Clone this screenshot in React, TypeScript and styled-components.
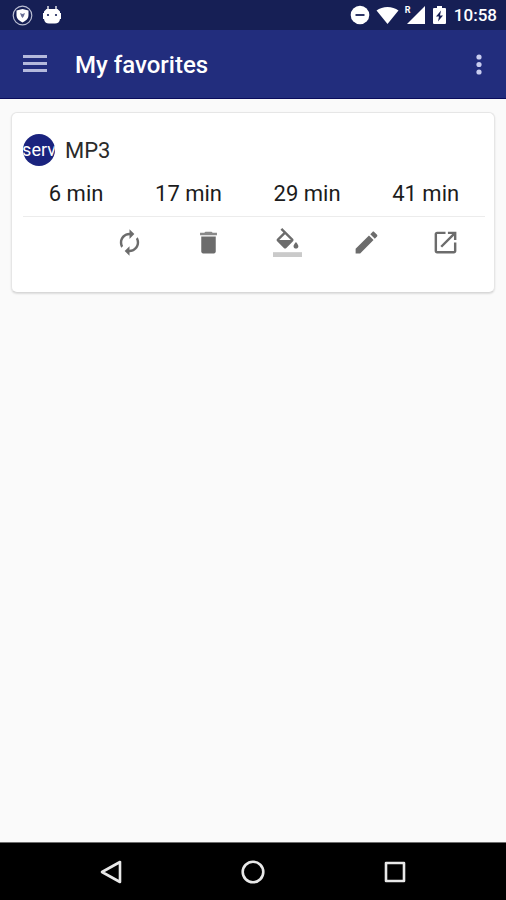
import React from "react";
import styled, { createGlobalStyle } from "styled-components";

const GlobalStyle = createGlobalStyle`
  *, *::before, *::after { box-sizing: border-box; }
  body {
    margin: 0;
    background: #fafafa;
    font-family: Roboto, "Liberation Sans", sans-serif;
  }
`;

const Screen = styled.div`
  display: flex;
  flex-direction: column;
  min-height: 100vh;
`;

const StatusBar = styled.div`
  display: flex;
  align-items: center;
  justify-content: space-between;
  height: 30px;
  padding: 0 9px 0 12px;
  background: #161f55;
  color: #fff;
`;

const StatusGroup = styled.div<{ $gap: number }>`
  display: flex;
  align-items: center;
  gap: ${(p) => p.$gap}px;
`;

const Clock = styled.time`
  font-size: 17px;
  font-weight: 500;
  line-height: 30px;
`;

const AppBar = styled.header`
  display: flex;
  align-items: center;
  height: 69px;
  padding: 2px 12px 0 20px;
  background: #222d7d;
  border-bottom: 1px solid #0a0c5c;
  color: #fff;
`;

const Title = styled.h1`
  flex: 1;
  margin: 0 0 0 25px;
  font-size: 24px;
  font-weight: 500;
  line-height: 32px;
`;

const IconButton = styled.button`
  display: flex;
  align-items: center;
  justify-content: center;
  padding: 0;
  border: 0;
  background: none;
  color: inherit;
  cursor: pointer;
`;

const Content = styled.main`
  flex: 1;
  padding: 13px 11px;
`;

const Card = styled.article`
  padding: 21px 9px 35px 11px;
  background: #fff;
  border: 1px solid #e6e6e6;
  border-bottom-color: #d8d8d8;
  border-radius: 6px;
  box-shadow: 0 1px 2px rgba(0, 0, 0, 0.12);
`;

const CardHeader = styled.div`
  display: flex;
  align-items: center;
  gap: 10px;
`;

const Avatar = styled.div`
  display: flex;
  align-items: center;
  justify-content: center;
  width: 32px;
  height: 32px;
  border-radius: 50%;
  overflow: hidden;
  background: #1a237e;
  color: #fff;
  font-size: 18px;
  line-height: 32px;
`;

const Name = styled.h2`
  margin: 0;
  padding-top: 2px;
  color: #2a2a2a;
  font-size: 22px;
  font-weight: 400;
  line-height: 30px;
`;

const Times = styled.ul`
  display: flex;
  justify-content: space-around;
  margin: 0;
  padding: 13px 0 7px;
  list-style: none;
  border-bottom: 1px solid #ececec;
`;

const Time = styled.li`
  color: #1c1c1c;
  font-size: 22px;
  line-height: 30px;
`;

const Actions = styled.div`
  display: grid;
  grid-template-columns: repeat(5, 1fr);
  padding: 11px 0 0 67px;
  color: #6c6c6c;
`;

const NavBar = styled.nav`
  display: flex;
  align-items: center;
  justify-content: center;
  gap: 118px;
  height: 58px;
  background: #000;
  border-top: 1px solid #6e6e6e;
  color: #e8e8e8;
`;

type IconProps = { size: number; children: React.ReactNode };

const Icon = ({ size, children }: IconProps) => (
  <svg width={size} height={size} viewBox="0 0 24 24" fill="currentColor" aria-hidden="true">
    {children}
  </svg>
);

const actions = [
  {
    label: "Refresh",
    icon: (
      <path d="M12 6v3l4-4-4-4v3c-4.42 0-8 3.58-8 8 0 1.57.46 3.03 1.24 4.26L6.7 14.8c-.45-.83-.7-1.79-.7-2.8 0-3.31 2.69-6 6-6zm6.76 1.74L17.3 9.2c.44.84.7 1.79.7 2.8 0 3.31-2.69 6-6 6v-3l-4 4 4 4v-3c4.42 0 8-3.58 8-8 0-1.57-.46-3.03-1.24-4.26z" />
    ),
  },
  {
    label: "Delete",
    icon: (
      <>
        <path d="M6 7h12v12.5c0 .8-.7 1.5-1.5 1.5h-9c-.8 0-1.5-.7-1.5-1.5z" />
        <path d="M19 4h-3.5l-1-1h-5l-1 1H5v2h14z" opacity=".8" />
      </>
    ),
  },
  {
    label: "Change color",
    icon: (
      <>
        <path d="M16.56 8.94L7.62 0 6.21 1.41l2.38 2.38-5.15 5.15c-.59.59-.59 1.54 0 2.12l5.5 5.5c.29.29.68.44 1.06.44s.77-.15 1.06-.44l5.5-5.5c.59-.58.59-1.53 0-2.12zM5.21 10L10 5.21 14.79 10H5.21zM19 11.5s-2 2.17-2 3.5c0 1.1.9 2 2 2s2-.9 2-2c0-1.33-2-3.5-2-3.5z" />
        <path d="M0 20h24v4H0z" opacity=".36" />
      </>
    ),
  },
  {
    label: "Edit",
    icon: (
      <path d="M3 17.25V21h3.75L17.81 9.94l-3.75-3.75L3 17.25zM20.71 7.04c.39-.39.39-1.02 0-1.41l-2.34-2.34c-.39-.39-1.02-.39-1.41 0l-1.83 1.83 3.75 3.75 1.83-1.83z" />
    ),
  },
  {
    label: "Open",
    icon: (
      <path d="M19 19H5V5h7V3H5c-1.11 0-2 .9-2 2v14c0 1.1.89 2 2 2h14c1.1 0 2-.9 2-2v-7h-2v7zM14 3v2h3.59l-9.83 9.83 1.41 1.41L19 6.41V10h2V3h-7z" />
    ),
  },
];

const times = ["6 min", "17 min", "29 min", "41 min"];

const ShieldIcon = () => (
  <svg width="21" height="21" viewBox="0 0 21 21" aria-hidden="true">
    <circle cx="10.5" cy="10.5" r="9.3" fill="none" stroke="#b9bdd2" strokeWidth="1.2" />
    <path d="M10.5 4L16.5 5.500v4.500c0 3.500-2.500 5.800-6 7.500C7 15.800 4.500 13.500 4.500 10V5.500z" fill="#fff" />
    <path d="M8 8l2.500 1L13 8l-1.200 3.300-1.300 1.700-1.300-1.700z" fill="#6a7096" />
  </svg>
);

const DroidIcon = () => (
  <svg width="18" height="20" viewBox="0 0 18 20" fill="#fff" aria-hidden="true">
    <path d="M5 1v5M13 1v5" stroke="#fff" strokeWidth="1.3" />
    <path d="M3.5 4h11L17 6.500V8h1v6h-1c-.3 3-2.300 4.500-5 4.500H6C3.300 18.500 1.300 17 1 14H0V8h1V6.500z" />
    <circle cx="5" cy="10" r="1.1" fill="#161f55" />
    <circle cx="13" cy="10" r="1.1" fill="#161f55" />
  </svg>
);

const DoNotDisturbIcon = () => (
  <svg width="20" height="20" viewBox="0 0 20 20" aria-hidden="true">
    <circle cx="10" cy="10" r="9.3" fill="#fff" />
    <path d="M5.5 10h9" stroke="#161f55" strokeWidth="1.8" />
  </svg>
);

const WifiIcon = () => (
  <svg width="23" height="20" viewBox="0 0 23 20" fill="#fff" aria-hidden="true">
    <path d="M.5 5.5C6.5.7 16.5.7 22.5 5.5L11.5 19z" />
  </svg>
);

const SignalWrap = styled.div`
  position: relative;
  display: flex;
  width: 20px;
  height: 20px;
`;

const Roaming = styled.span`
  position: absolute;
  top: 0;
  left: 0;
  font-size: 9px;
  font-weight: 700;
  line-height: 10px;
`;

const SignalIcon = () => (
  <SignalWrap>
    <svg width="20" height="20" viewBox="0 0 20 20" fill="#fff" aria-hidden="true">
      <path d="M20 1v18H2z" />
    </svg>
    <Roaming>R</Roaming>
  </SignalWrap>
);

const BatteryIcon = () => (
  <svg width="13" height="20" viewBox="0 0 13 20" aria-hidden="true">
    <path d="M4 1h5v2h3a1 1 0 0 1 1 1v14a1 1 0 0 1-1 1H1a1 1 0 0 1-1-1V4a1 1 0 0 1 1-1h3z" fill="#fff" />
    <path d="M8 5.5L3 11.5h3l-1 5 5-6H7z" fill="#161f55" />
  </svg>
);

export default function App() {
  return (
    <>
      <GlobalStyle />
      <Screen>
        <StatusBar>
          <StatusGroup $gap={10}>
            <ShieldIcon />
            <DroidIcon />
          </StatusGroup>
          <StatusGroup $gap={8}>
            <StatusGroup $gap={6}>
              <DoNotDisturbIcon />
              <WifiIcon />
              <SignalIcon />
            </StatusGroup>
            <BatteryIcon />
            <Clock>10:58</Clock>
          </StatusGroup>
        </StatusBar>
        <AppBar>
          <IconButton aria-label="Open menu">
            <svg width="30" height="32" viewBox="0 0 30 32" fill="#b4b9dc" aria-hidden="true">
              <path d="M3 6h24v3H3zM3 13h24v3H3zM3 20h24v3H3z" />
            </svg>
          </IconButton>
          <Title>My favorites</Title>
          <IconButton aria-label="More options">
            <svg width="30" height="32" viewBox="0 0 30 32" fill="#c9cdf0" aria-hidden="true">
              <circle cx="15" cy="8" r="2.6" />
              <circle cx="15" cy="15.5" r="2.6" />
              <circle cx="15" cy="23" r="2.6" />
            </svg>
          </IconButton>
        </AppBar>
        <Content>
          <Card>
            <CardHeader>
              <Avatar>serv</Avatar>
              <Name>MP3</Name>
            </CardHeader>
            <Times>
              {times.map((time) => (
                <Time key={time}>{time}</Time>
              ))}
            </Times>
            <Actions>
              {actions.map(({ label, icon }) => (
                <IconButton key={label} aria-label={label}>
                  <Icon size={29}>{icon}</Icon>
                </IconButton>
              ))}
            </Actions>
          </Card>
        </Content>
        <NavBar>
          <IconButton aria-label="Back">
            <svg width="24" height="24" viewBox="0 0 24 24" fill="none" stroke="currentColor" strokeWidth="2.6" strokeLinejoin="round" aria-hidden="true">
              <path d="M21 2v20L3 12z" />
            </svg>
          </IconButton>
          <IconButton aria-label="Home">
            <svg width="24" height="24" viewBox="0 0 24 24" fill="none" stroke="currentColor" strokeWidth="2.6" aria-hidden="true">
              <circle cx="12" cy="12" r="10.3" />
            </svg>
          </IconButton>
          <IconButton aria-label="Recent apps">
            <svg width="24" height="24" viewBox="0 0 24 24" fill="none" stroke="currentColor" strokeWidth="2.6" strokeLinejoin="round" aria-hidden="true">
              <path d="M3 3h18v18H3z" />
            </svg>
          </IconButton>
        </NavBar>
      </Screen>
    </>
  );
}
